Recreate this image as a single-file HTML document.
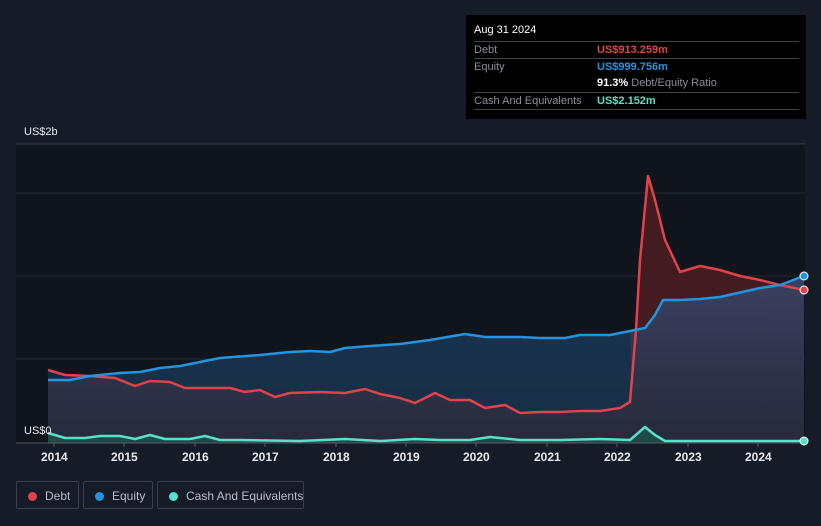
<!DOCTYPE html><html><head><style>
body{margin:0;width:821px;height:526px;background:#161c27;font-family:"Liberation Sans",sans-serif;overflow:hidden;position:relative}
.tt{position:absolute;left:466px;top:15px;width:340px;height:104px;background:#000;color:#fff;font-size:11px}
.row{position:absolute;left:8px;width:325px;border-top:1px solid #444;height:17px;line-height:17px}
.lbl{color:#8a8f98;position:absolute;left:0}
.val{position:absolute;left:123px;font-weight:bold}
.leg{position:absolute;top:481px;height:28px;border:1px solid #3a404c;border-radius:2px;color:#b8bcc4;font-size:12px;line-height:28px;box-sizing:border-box;white-space:nowrap}
.leg i{position:absolute;left:11px;top:10px;width:9px;height:9px;border-radius:50%}
.ax{position:absolute;top:450px;color:#e6e8eb;font-size:12px;font-weight:bold}
</style></head><body>
<svg width="821" height="526" style="position:absolute;left:0;top:0">
<defs><linearGradient id="eq" x1="0" y1="0" x2="0" y2="1"><stop offset="0" stop-color="#3a4060"/><stop offset="1" stop-color="#262a3a"/></linearGradient></defs>
<rect x="16" y="144" width="789" height="299" fill="#10141c"/>
<line x1="16" y1="144" x2="805" y2="144" stroke="#3a3f48"/>
<line x1="16" y1="193" x2="805" y2="193" stroke="#262a32"/>
<line x1="16" y1="276" x2="805" y2="276" stroke="#262a32"/>
<line x1="16" y1="359" x2="805" y2="359" stroke="#262a32"/>
<path d="M48,380 L70,380 90,376 120,373 140,372 160,368 180,366 200,362 220,358 260,355 290,352 310,351 330,352 345,348 370,346 400,344 430,340 465,334 485,337 520,337 540,338 565,338 580,335 610,335 630,331 645,328 655,315 663,300 680,300 700,299 720,297 760,288 780,285 804,276 L804,443 48,443Z" fill="url(#eq)"/>
<path d="M48,380 L70,380 90,376 120,373 140,372 160,368 180,366 200,362 220,358 260,355 290,352 310,351 330,352 345,348 370,346 400,344 430,340 465,334 485,337 520,337 540,338 565,338 580,335 610,335 630,331 L632,402 620,408 600,411 580,411 560,412 540,412 520,413 505,405 485,408 470,400 450,400 435,393 415,403 400,398 380,394 365,389 345,393 320,392 290,393 275,397 260,390 245,392 230,388 200,388 185,388 170,382 150,381 135,386 115,378 90,376 65,375 48,370Z" fill="#133048" opacity="0.8"/>
<path d="M636,330 L640,260 648,176 655,200 665,240 680,272 700,266 720,270 740,276 760,280 773,284 760,288 720,297 700,299 680,300 663,300 655,315 645,328Z" fill="#4a1c22" opacity="0.9"/>
<path d="M48,370 L65,375 90,376 115,378 135,386 150,381 170,382 185,388 200,388 230,388 245,392 260,390 275,397 290,393 320,392 345,393 365,389 380,394 400,398 415,403 435,393 450,400 470,400 485,408 505,405 520,413 540,412 560,412 580,411 600,411 620,408 630,402 636,330 640,260 648,176 655,200 665,240 680,272 700,266 720,270 740,276 760,280 780,285 804,290" fill="none" stroke="#e0434a" stroke-width="2.5" stroke-linejoin="round"/>
<path d="M48,380 L70,380 90,376 120,373 140,372 160,368 180,366 200,362 220,358 260,355 290,352 310,351 330,352 345,348 370,346 400,344 430,340 465,334 485,337 520,337 540,338 565,338 580,335 610,335 630,331 645,328 655,315 663,300 680,300 700,299 720,297 760,288 780,285 804,276" fill="none" stroke="#2394e0" stroke-width="2.5" stroke-linejoin="round"/>
<path d="M48,433 L65,438 85,438 100,436 120,436 135,439 150,435 165,439 190,439 205,436 220,440 240,440 300,441 345,439 380,441 415,439 440,440 470,440 490,437 520,440 560,440 600,439 630,440 645,427 655,435 665,441 700,441 804,441 L804,443 48,443Z" fill="#1f4a48"/>
<path d="M48,433 L65,438 85,438 100,436 120,436 135,439 150,435 165,439 190,439 205,436 220,440 240,440 300,441 345,439 380,441 415,439 440,440 470,440 490,437 520,440 560,440 600,439 630,440 645,427 655,435 665,441 700,441 804,441" fill="none" stroke="#58e0c8" stroke-width="2.5" stroke-linejoin="round"/>
<line x1="16" y1="443" x2="805" y2="443" stroke="#555a63"/>
<g stroke="#555a63"><line x1="54" y1="443" x2="54" y2="447"/><line x1="124" y1="443" x2="124" y2="447"/><line x1="195" y1="443" x2="195" y2="447"/><line x1="265" y1="443" x2="265" y2="447"/><line x1="336" y1="443" x2="336" y2="447"/><line x1="406" y1="443" x2="406" y2="447"/><line x1="476" y1="443" x2="476" y2="447"/><line x1="547" y1="443" x2="547" y2="447"/><line x1="617" y1="443" x2="617" y2="447"/><line x1="688" y1="443" x2="688" y2="447"/><line x1="758" y1="443" x2="758" y2="447"/></g>
<circle cx="804" cy="276" r="4" fill="#2394e0" stroke="#fff" stroke-width="1"/>
<circle cx="804" cy="290" r="4" fill="#e0434a" stroke="#fff" stroke-width="1"/>
<circle cx="804" cy="441" r="4" fill="#58e0c8" stroke="#fff" stroke-width="1"/>
</svg>
<div style="position:absolute;left:24px;top:126px;color:#e6e8eb;font-size:11px">US$2b</div>
<div style="position:absolute;left:24px;top:425px;color:#e6e8eb;font-size:11px">US$0</div>
<div class="ax" style="left:41px">2014</div><div class="ax" style="left:111px">2015</div><div class="ax" style="left:182px">2016</div><div class="ax" style="left:252px">2017</div><div class="ax" style="left:323px">2018</div><div class="ax" style="left:393px">2019</div><div class="ax" style="left:463px">2020</div><div class="ax" style="left:534px">2021</div><div class="ax" style="left:604px">2022</div><div class="ax" style="left:675px">2023</div><div class="ax" style="left:745px">2024</div>
<div class="tt">
<div style="position:absolute;left:8px;top:9px">Aug 31 2024</div>
<div class="row" style="top:26px"><span class="lbl">Debt</span><span class="val" style="color:#e0434a">US$913.259m</span></div>
<div class="row" style="top:43px"><span class="lbl">Equity</span><span class="val" style="color:#2394e0">US$999.756m</span></div>
<div class="row" style="top:60px;border-top:none"><span class="val" style="color:#fff">91.3% <span style="color:#8a8f98;font-weight:normal">Debt/Equity Ratio</span></span></div>
<div class="row" style="top:77px"><span class="lbl">Cash And Equivalents</span><span class="val" style="color:#58e0c8">US$2.152m</span></div>
<div class="row" style="top:94px;height:0"></div>
</div>
<div class="leg" style="left:16px;width:63px"><i style="background:#e0434a"></i><span style="position:absolute;left:28px">Debt</span></div>
<div class="leg" style="left:83px;width:70px"><i style="background:#2394e0"></i><span style="position:absolute;left:28px">Equity</span></div>
<div class="leg" style="left:157px;width:147px"><i style="background:#58e0c8"></i><span style="position:absolute;left:28px">Cash And Equivalents</span></div>
</body></html>
